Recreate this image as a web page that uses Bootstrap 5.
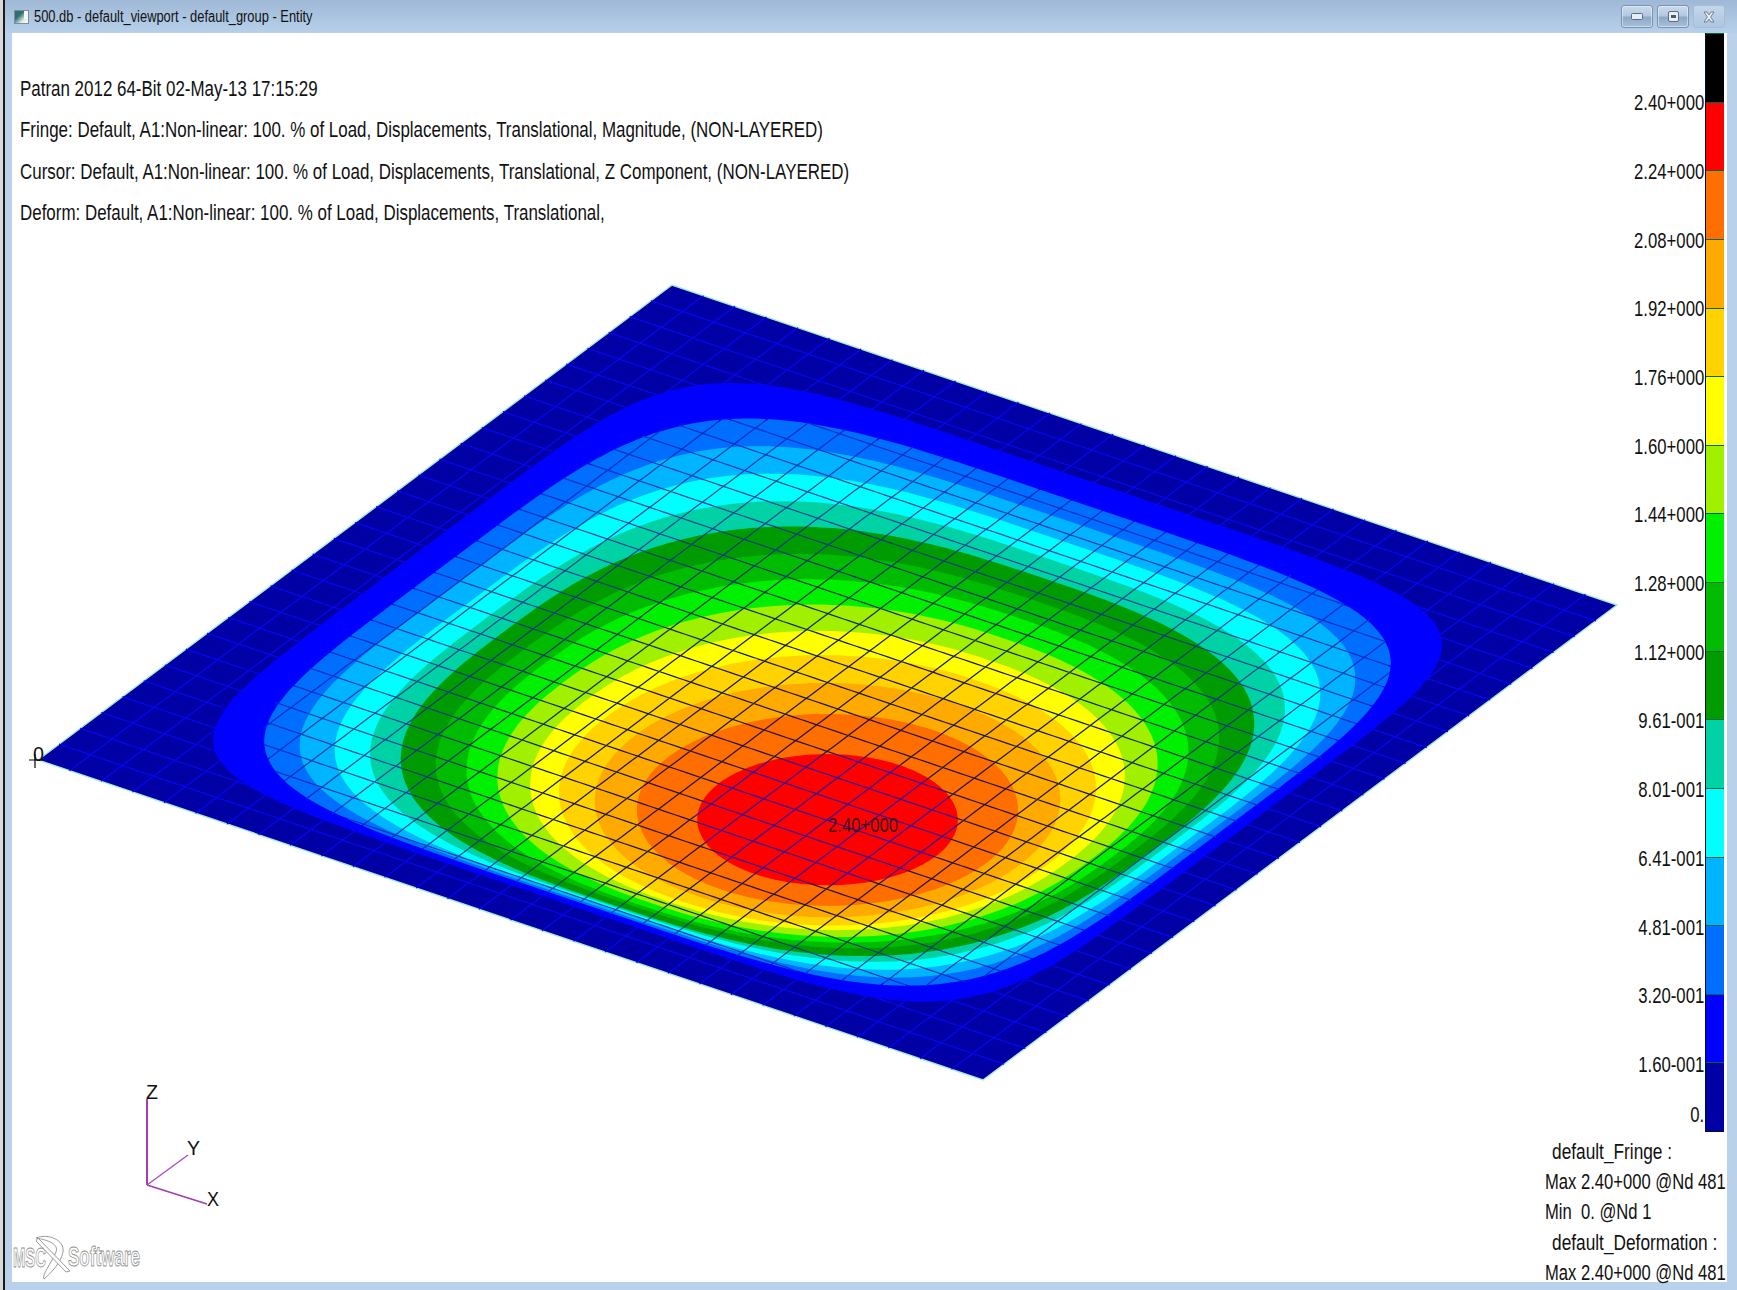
<!DOCTYPE html>
<html lang="en">
<head>
  <meta charset="UTF-8">
  <meta name="viewport" content="width=device-width, initial-scale=1.0">
  <title>500.db - default_viewport - default_group - Entity</title>
  <link href="https://cdn.jsdelivr.net/npm/bootstrap@5.3.0/dist/css/bootstrap.min.css" rel="stylesheet">
  <style>
    html, body { height: 1290px; overflow: hidden; background: #d9d9d9; }
    .pw-frame { width: 1734px; height: 1290px; margin-left: 3px; background: #b9d1ea; border-left: 2px solid #1a1a1a; }
    .pw-title { height: 33px; background: linear-gradient(#9fb8d6, #b7d0ea); padding-left: 9px; padding-right: 12px; }
    .pw-title-text { font: 16px/1 "Liberation Sans", sans-serif; color: #111; transform: scaleX(.805); transform-origin: left; white-space: nowrap; margin-left: 5px; }
    .pw-btn { width: 32px; height: 23px; border: 1px solid #7a92b2; border-radius: 3px; background: linear-gradient(#c9daec 0%, #b4c9e0 45%, #8fa8c6 55%, #a9c0da 100%); box-shadow: inset 0 0 0 1px rgba(255,255,255,.45); }
    .pw-btn-x { border-color: #a7bdd7; background: linear-gradient(#c4d6ea, #aec6e0); box-shadow: none; }
    .pw-client { height: 1249px; margin-left: 7px; margin-right: 10px; background: #fff; }
    .pw-info { padding: 35px 0 0 8px; }
    .pw-line, .pw-tick, .pw-note { font-family: "Liberation Sans", sans-serif; font-size: 22px; color: #111; white-space: nowrap; }
    .pw-line { height: 41.4px; line-height: 41.4px; transform: scaleX(.77); transform-origin: left; }
    .pw-side { width: 182px; }
    .pw-ticks { width: 160px; padding-top: 36.3px; }
    .pw-tick { height: 68.69px; line-height: 68.69px; text-align: right; transform: scaleX(.76); transform-origin: right; padding-right: 1px; }
    .pw-tick-last { height: 30px; line-height: 30px; }
    .pw-bar { width: 19px; height: 1099px; border-left: 1px solid #012; border-bottom: 1px solid #012; }
    .pw-seg { flex: 1 1 0; border-top: 1px solid #063; }
    .pw-notes { padding-top: 4.5px; }
    .pw-note { height: 30.4px; line-height: 30.4px; transform: scaleX(.755); transform-origin: left; }
    .pw-note-in { padding-left: 9px; transform: scaleX(.785); }
    .pw-note-end { height: 17px; line-height: 17px; margin-top: 6px; }
    .pw-plot { left: 0; top: 0; width: 1737px; height: 1290px; pointer-events: none; }
    .pw-plot text { font-family: "Liberation Sans", sans-serif; }
  </style>
</head>
<body>
  <div class="pw-frame d-flex flex-column">
    <!-- title bar -->
    <div class="pw-title d-flex align-items-center">
      <svg width="15" height="14" viewBox="0 0 15 14"><defs><linearGradient id="ico" x1="0" y1="0" x2="1" y2="1"><stop offset=".35" stop-color="#2f6f74"/><stop offset=".7" stop-color="#dfeee8"/><stop offset="1" stop-color="#fff"/></linearGradient></defs><rect x=".5" y=".5" width="14" height="13" fill="url(#ico)" stroke="#7f8c96"/><rect x="10" y="1" width="4" height="8" fill="#f4f7f8"/></svg>
      <span class="pw-title-text">500.db - default_viewport - default_group - Entity</span>
      <div class="ms-auto d-flex gap-1">
        <div class="pw-btn d-flex align-items-center justify-content-center"><svg width="12" height="7" viewBox="0 0 12 7"><rect x=".5" y=".5" width="11" height="6" rx="1" fill="#e4ecf4" stroke="#5a6a80"/></svg></div>
        <div class="pw-btn d-flex align-items-center justify-content-center"><svg width="11" height="11" viewBox="0 0 11 11"><rect x=".5" y=".5" width="10" height="10" rx="1.5" fill="#e8eff6" stroke="#5a6a80"/><rect x="3" y="4" width="5" height="3" fill="#4a5a70"/></svg></div>
        <div class="pw-btn pw-btn-x d-flex align-items-center justify-content-center"><svg width="14" height="12" viewBox="0 0 14 12"><path d="M2 1h3l2 3 2-3h3l-3.4 5L12 11H9L7 8l-2 3H2l3.4-5z" fill="#e8eff6" stroke="#66758a" stroke-width=".9"/></svg></div>
      </div>
    </div>

    <!-- graphics viewport -->
    <div class="pw-client d-flex">
      <div class="pw-info flex-grow-1">
        <div class="pw-line">Patran 2012 64-Bit 02-May-13 17:15:29</div>
        <div class="pw-line">Fringe: Default, A1:Non-linear: 100. % of Load, Displacements, Translational, Magnitude, (NON-LAYERED)</div>
        <div class="pw-line">Cursor: Default, A1:Non-linear: 100. % of Load, Displacements, Translational, Z Component, (NON-LAYERED)</div>
        <div class="pw-line">Deform: Default, A1:Non-linear: 100. % of Load, Displacements, Translational,</div>
      </div>
      <div class="pw-side">
        <div class="d-flex">
          <div class="pw-ticks">
            <div class="pw-tick">2.40+000</div>
            <div class="pw-tick">2.24+000</div>
            <div class="pw-tick">2.08+000</div>
            <div class="pw-tick">1.92+000</div>
            <div class="pw-tick">1.76+000</div>
            <div class="pw-tick">1.60+000</div>
            <div class="pw-tick">1.44+000</div>
            <div class="pw-tick">1.28+000</div>
            <div class="pw-tick">1.12+000</div>
            <div class="pw-tick">9.61-001</div>
            <div class="pw-tick">8.01-001</div>
            <div class="pw-tick">6.41-001</div>
            <div class="pw-tick">4.81-001</div>
            <div class="pw-tick">3.20-001</div>
            <div class="pw-tick">1.60-001</div>
            <div class="pw-tick pw-tick-last">0.</div>
          </div>
          <div class="pw-bar d-flex flex-column" id="fringe-bar"></div>
        </div>
        <div class="pw-notes">
          <div class="pw-note pw-note-in">default_Fringe :</div>
          <div class="pw-note">Max 2.40+000 @Nd 481</div>
          <div class="pw-note">Min&nbsp; 0. @Nd 1</div>
          <div class="pw-note pw-note-in">default_Deformation :</div>
          <div class="pw-note pw-note-end">Max 2.40+000 @Nd 481</div>
        </div>
      </div>
    </div>
  </div>

  <svg class="pw-plot position-absolute" id="plot" viewBox="0 0 1737 1290" xmlns="http://www.w3.org/2000/svg">
    <g id="mesh"></g>
    <text x="828" y="832" font-size="21" fill="#3a1020" textLength="70" lengthAdjust="spacingAndGlyphs">2.40+000</text>
    <path d="M29 760H43M35 754V768" stroke="#000" stroke-width="1.2" fill="none"/>
    <text x="33" y="761" font-size="21" fill="#111" textLength="11" lengthAdjust="spacingAndGlyphs">0</text>
    <!-- axis triad -->
    <path d="M147 1185V1099" stroke="#a23fb0" stroke-width="2" fill="none"/>
    <path d="M147 1185L188 1155" stroke="#b050c0" stroke-width="1.5" fill="none"/>
    <path d="M147 1185L207 1204" stroke="#a23fb0" stroke-width="1.8" fill="none"/>
    <text x="146" y="1099" font-size="20" fill="#111" textLength="12" lengthAdjust="spacingAndGlyphs">Z</text>
    <text x="187" y="1155" font-size="20" fill="#111" textLength="13" lengthAdjust="spacingAndGlyphs">Y</text>
    <text x="207" y="1206" font-size="20" fill="#111" textLength="12" lengthAdjust="spacingAndGlyphs">X</text>
    <!-- vendor mark -->
    <g fill="#fff" stroke="#8e8e8e" stroke-width=".9">
      <path d="M36 1238C48 1233 65 1240 63 1252C61 1263 50 1274 44 1279C41 1276 52 1262 56 1252C59 1244 48 1240 36 1238Z"/>
      <path d="M38 1238L70 1271L66 1272L36 1241Z"/>
      <text x="13" y="1267" font-size="27" font-weight="700" textLength="33" lengthAdjust="spacingAndGlyphs">MSC</text>
      <text x="68" y="1266" font-size="27" font-weight="700" textLength="72" lengthAdjust="spacingAndGlyphs">Software</text>
    </g>
  </svg>

  <script src="https://cdn.jsdelivr.net/npm/bootstrap@5.3.0/dist/js/bootstrap.bundle.min.js"></script>
  <script>
    // legend colours, top band is red, bottom band is navy
    const fringe = ['#0000a5','#0000ff','#006eff','#00b4ff','#00ffff','#00d2a5','#009b00','#00bb00','#00f000',
                    '#a0f000','#ffff00','#ffd200','#ffaa00','#ff6e00','#ff0000'];
    const bar = document.getElementById('fringe-bar');
    ['#000000'].concat(fringe.slice().reverse()).forEach(function (c) {
      const d = document.createElement('div');
      d.className = 'pw-seg';
      d.style.background = c;
      bar.appendChild(d);
    });

    // plate: parallelogram on screen, the fringe bands drop with deflection, the mesh stays flat
    const O = [38, 760], A = [634, -475], B = [945, 320], DROP = 147;
    // contour k: half size r and superellipse exponent n (x, y run -1..1)
    const levels = [null,
      [.87,6.0],[.825,4.6],[.79,4.0],[.755,3.5],[.718,3.1],[.685,2.8],[.64,2.6],[.602,2.4],
      [.557,2.3],[.508,2.2],[.465,2.1],[.406,2.05],[.335,2.0],[.229,2.0]];

    function norm(k, x, y) {
      const r = levels[k][0], n = levels[k][1];
      return Math.pow(Math.pow(Math.abs(x / r), n) + Math.pow(Math.abs(y / r), n), 1 / n);
    }
    function toScreen(x, y, w) {
      const u = (x + 1) / 2, v = (y + 1) / 2;
      return [O[0] + u * A[0] + v * B[0], O[1] + u * A[1] + v * B[1] + DROP * w];
    }
    function project(x, y, w) {
      const p = toScreen(x, y, w);
      return p[0].toFixed(1) + ' ' + p[1].toFixed(1);
    }
    // which band is drawn at this screen point
    const det = A[0] * B[1] - A[1] * B[0];
    function bandAt(p) {
      for (let k = 14; k >= 1; k--) {
        const dx = p[0] - O[0], dy = p[1] - O[1] - DROP * k / 15;
        const u = (dx * B[1] - dy * B[0]) / det, v = (A[0] * dy - A[1] * dx) / det;
        if (norm(k, 2 * u - 1, 2 * v - 1) <= 1) return k;
      }
      return 0;
    }

    const outline = 'M' + project(-1, -1, 0) + 'L' + project(1, -1, 0) + 'L' + project(1, 1, 0) + 'L' + project(-1, 1, 0) + 'Z';
    let svg = '<path d="' + outline + '" fill="' + fringe[0] + '" stroke="#a8ecd0" stroke-width="1.4"/>';
    for (let k = 1; k < 15; k++) {
      const r = levels[k][0], n = levels[k][1];
      let d = '';
      for (let i = 0; i < 240; i++) {
        const t = i / 240 * Math.PI * 2, c = Math.cos(t), s = Math.sin(t);
        const x = r * Math.sign(c) * Math.pow(Math.abs(c), 2 / n);
        const y = r * Math.sign(s) * Math.pow(Math.abs(s), 2 / n);
        d += (i ? 'L' : 'M') + project(x, y, k / 15);
      }
      svg += '<path d="' + d + 'Z" fill="' + fringe[k] + '"/>';
    }

    // mesh lines, 30 x 30 elements, rim left out. blue lines read darker over the warm bands
    const lineCol = ['#0606f0','#0000ff','#0a30c4','#0c40b4','#0f4aa4','#0a4a94','#064076','#083c66','#0c3c40',
                     '#182e42','#161e30','#1c1a24','#221820','#2a1430','#3a1296'];
    const lines = lineCol.map(function () { return ''; });
    const STEPS = 120;
    function addSegment(x0, y0, x1, y1) {
      const k = bandAt(toScreen((x0 + x1) / 2, (y0 + y1) / 2, 0));
      lines[k] += 'M' + project(x0, y0, 0) + 'L' + project(x1, y1, 0);
    }
    for (let i = 1; i < 30; i++) {
      const a = -1 + i / 15;
      for (let j = 0; j < STEPS; j++) {
        const b0 = -1 + 2 * j / STEPS, b1 = -1 + 2 * (j + 1) / STEPS;
        addSegment(a, b0, a, b1);
        addSegment(b0, a, b1, a);
      }
    }
    lines.forEach(function (d, k) {
      svg += '<path d="' + d + '" fill="none" stroke="' + lineCol[k] + '" stroke-width="1.3"/>';
    });
    document.getElementById('mesh').innerHTML = svg;
  </script>
</body>
</html>
